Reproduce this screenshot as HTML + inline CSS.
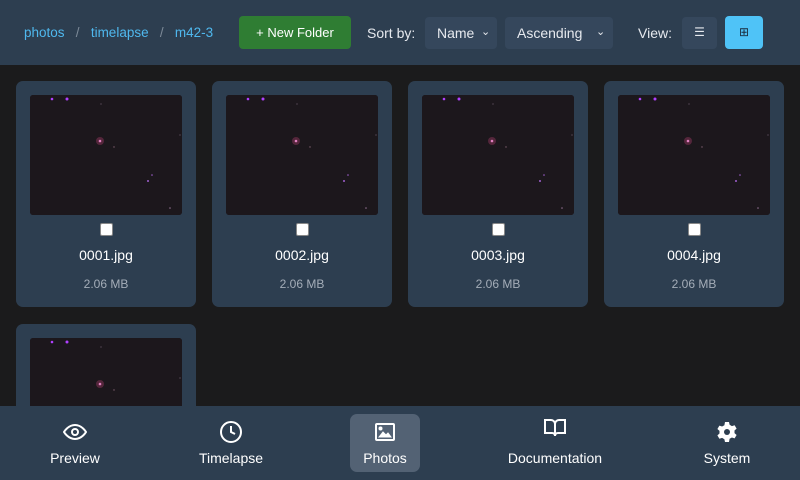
<!DOCTYPE html>
<html style="width:800px;height:480px;overflow:hidden"><head><style>
*{box-sizing:border-box;margin:0;padding:0}
body{width:800px;height:480px;overflow:hidden;background:#1b1b1c;font-family:"Liberation Sans",sans-serif;position:relative}
.hdr{position:absolute;left:0;top:0;width:800px;height:65px;background:#2d3e50}
.t{position:absolute;font-size:14px;color:#e6e9ee;line-height:16px}
.bc{color:#4fb8ee}
.sep{color:#7d8a98}
.btn{position:absolute;border-radius:4px}
.card{position:absolute;width:180px;height:226px;background:#2d3e50;border-radius:7px;overflow:hidden}
.img{position:absolute;left:14px;top:14px;width:152px;height:120px;border-radius:3px;overflow:hidden;background:#1c171c}
.cb{position:absolute;left:84px;top:142px;width:13px;height:13px;background:#fff;border:1px solid #888;border-radius:2px}
.nm{position:absolute;left:0;width:180px;top:166px;text-align:center;color:#fff;font-size:14px}
.sz{position:absolute;left:0;width:180px;top:196px;text-align:center;color:#a4adb8;font-size:12px}
.nav{position:absolute;left:0;top:406px;width:800px;height:74px;background:#2d3e50}
.ni{position:absolute;top:0;height:74px;text-align:center;color:#fff;font-size:14px}
.ni span{position:absolute;left:0;right:0;top:44px}
.ni svg{position:absolute;top:14px;left:50%;margin-left:-12px}
</style></head><body>
<div class="hdr">
<div class="t" style="left:24px;top:25px;font-size:13.5px"><span class="bc">photos</span><span class="sep">&nbsp;&nbsp; / &nbsp;&nbsp;</span><span class="bc">timelapse</span><span class="sep">&nbsp;&nbsp; / &nbsp;&nbsp;</span><span class="bc">m42-3</span></div>
<div class="btn" style="left:239px;top:16px;width:112px;height:33px;background:#2f7d33"></div>
<div class="t" style="left:239px;top:25px;width:112px;text-align:center;color:#fff;font-size:13px">+ New Folder</div>
<div class="t" style="left:367px;top:25px">Sort by:</div>
<div class="btn" style="left:425px;top:17px;width:72px;height:32px;background:#35475c"></div>
<div class="t" style="left:437px;top:25px">Name</div>
<div class="t" style="left:481px;top:24px;font-size:11px">&#8964;</div>
<div class="btn" style="left:505px;top:17px;width:108px;height:32px;background:#35475c"></div>
<div class="t" style="left:517px;top:25px">Ascending</div>
<div class="t" style="left:596px;top:24px;font-size:11px">&#8964;</div>
<div class="t" style="left:638px;top:25px">View:</div>
<div class="btn" style="left:682px;top:17px;width:35px;height:32px;background:#35475c"></div>
<div class="t" style="left:682px;top:24px;width:35px;text-align:center;font-size:12px">&#9776;</div>
<div class="btn" style="left:725px;top:16px;width:38px;height:33px;background:#4fc3f7"></div>
<div class="t" style="left:725px;top:24px;width:38px;text-align:center;font-size:12px;color:#1a2a3a">&#8862;</div>
</div>

<svg width="0" height="0" style="position:absolute"><defs><g id="sky">
<rect width="152" height="120" fill="#1c171c"/>
<circle cx="22" cy="4" r="1.3" fill="#b040ff"/><circle cx="37" cy="4" r="1.5" fill="#b040ff"/>
<circle cx="70" cy="46" r="4" fill="#7a3050" opacity=".6"/><circle cx="70" cy="46" r="1.3" fill="#e080c0"/>
<circle cx="118" cy="86" r="1" fill="#a060d0"/><circle cx="122" cy="80" r="0.8" fill="#a060d0"/>
<circle cx="84" cy="52" r=".7" fill="#806070"/><circle cx="150" cy="40" r=".6" fill="#706070"/>
<circle cx="140" cy="113" r=".8" fill="#907090"/><circle cx="71" cy="9" r=".6" fill="#706070"/>
</g></defs></svg>

<div class="card" style="left:16px;top:81px"><div class="img"><svg width="152" height="120"><use href="#sky"/></svg></div><div class="cb"></div><div class="nm">0001.jpg</div><div class="sz">2.06 MB</div></div>
<div class="card" style="left:212px;top:81px"><div class="img"><svg width="152" height="120"><use href="#sky"/></svg></div><div class="cb"></div><div class="nm">0002.jpg</div><div class="sz">2.06 MB</div></div>
<div class="card" style="left:408px;top:81px"><div class="img"><svg width="152" height="120"><use href="#sky"/></svg></div><div class="cb"></div><div class="nm">0003.jpg</div><div class="sz">2.06 MB</div></div>
<div class="card" style="left:604px;top:81px"><div class="img"><svg width="152" height="120"><use href="#sky"/></svg></div><div class="cb"></div><div class="nm">0004.jpg</div><div class="sz">2.06 MB</div></div>
<div class="card" style="left:16px;top:324px;height:82px;border-radius:7px 7px 0 0"><div class="img"><svg width="152" height="120"><use href="#sky"/></svg></div></div>

<div class="nav">
<div class="ni" style="left:35px;width:80px"><svg width="24" height="24" viewBox="0 0 24 24" fill="none" stroke="#fff" stroke-width="2"><path d="M1 12s4-7 11-7 11 7 11 7-4 7-11 7S1 12 1 12z"/><circle cx="12" cy="12" r="3"/></svg><span>Preview</span></div>
<div class="ni" style="left:186px;width:90px"><svg width="24" height="24" viewBox="0 0 24 24" fill="none" stroke="#fff" stroke-width="2"><circle cx="12" cy="12" r="10"/><path d="M12 6v6l4 2"/></svg><span>Timelapse</span></div>
<div class="ni" style="left:350px;width:70px;top:8px;height:58px;background:#536274;border-radius:7px"><svg width="24" height="24" viewBox="0 0 24 24" fill="none" stroke="#fff" stroke-width="2" style="top:6px"><rect x="3" y="4" width="18" height="16" rx="1"/><path d="M6 17l4-5 3 3 2-2 3 4z" fill="#fff" stroke-width="1"/><circle cx="7.5" cy="8.5" r="1" fill="#fff"/></svg><span style="top:36px">Photos</span></div>
<div class="ni" style="left:495px;width:120px"><svg width="24" height="24" viewBox="0 0 24 24" fill="none" stroke="#fff" stroke-width="2" style="top:10px"><path d="M2 4h6a4 4 0 014 4v12a3 3 0 00-3-3H2zM22 4h-6a4 4 0 00-4 4v12a3 3 0 013-3h7z"/></svg><span>Documentation</span></div>
<div class="ni" style="left:687px;width:80px"><svg width="24" height="24" viewBox="0 0 24 24" fill="#fff"><path d="M10 2h4l.6 2.8 2.3 1.3 2.7-.9 2 3.4-2.1 1.9v2.6l2.1 1.9-2 3.4-2.7-.9-2.3 1.3L14 22h-4l-.6-2.8-2.3-1.3-2.7.9-2-3.4 2.1-1.9v-2.6L2.4 9l2-3.4 2.7.9 2.3-1.3z"/><circle cx="12" cy="12" r="3" fill="#2d3e50"/></svg><span>System</span></div>
</div>
</body></html>
